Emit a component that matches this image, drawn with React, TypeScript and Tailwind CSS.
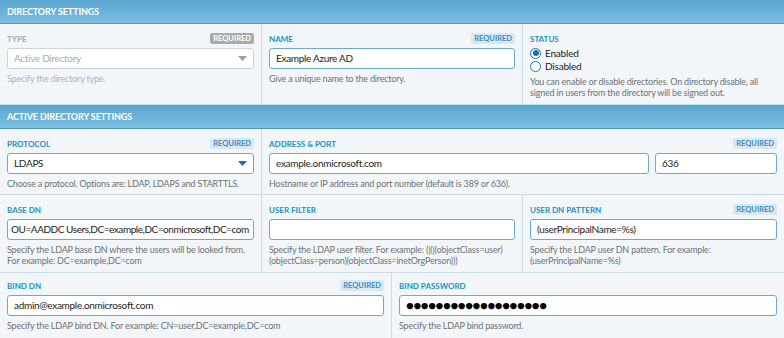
import type { ReactNode } from 'react';

const font = { fontFamily: 'Lato, "Open Sans", sans-serif' };

const Header = ({ title }: { title: string }) => (
  <div className="h-[24px] flex items-center px-[7px] bg-gradient-to-b from-[#58a6d1] to-[#7cbfe1] border-b border-[#4b97c4]">
    <span className="text-white text-[9px] font-bold tracking-[-0.1px] uppercase">{title}</span>
  </div>
);

const Badge = ({ disabled = false }: { disabled?: boolean }) => (
  <span
    className={`px-[3px] h-[11px] leading-[11px] rounded-[2px] text-[7.5px] font-bold ${
      disabled ? 'bg-[#ababab] text-white' : 'bg-[#d8e8f3] text-[#3b8ec4]'
    }`}
  >
    REQUIRED
  </span>
);

const Label = ({ text, required = false, disabled = false }: { text?: string; required?: boolean; disabled?: boolean }) => (
  <div className="h-[11px] flex items-center justify-between">
    <span className={`text-[8px] font-bold uppercase ${disabled ? 'text-[#a3a9ad]' : 'text-[#1c8fcf]'}`}>{text}</span>
    {required && <Badge disabled={disabled} />}
  </div>
);

type InputProps = {
  value?: string;
  disabled?: boolean;
  select?: boolean;
  dots?: boolean;
  tight?: boolean;
};

const Input = ({ value, disabled = false, select = false, dots = false, tight = false }: InputProps) => (
  <div
    className={`mt-[4px] h-[21px] flex items-center rounded-[3px] border bg-white ${
      tight ? 'px-[3px]' : 'px-[6px]'
    } ${disabled ? 'border-[#cfd3d6]' : 'border-[#68acd5]'}`}
  >
    {dots ? (
      <span className="text-[13px] leading-none tracking-[-0.4px] text-black">{'●'.repeat(19)}</span>
    ) : (
      <span
        className={`flex-1 text-[10px] whitespace-nowrap overflow-hidden ${
          tight ? 'tracking-[-0.45px]' : 'tracking-[-0.3px]'
        } ${disabled ? 'text-[#a7abae]' : 'text-[#1d1d1d]'}`}
      >
        {value}
      </span>
    )}
    {select && (
      <svg width="9" height="5" viewBox="0 0 9 5" className="ml-1">
        <path d="M0 0h9L4.5 5z" fill={disabled ? '#9a9ea1' : '#1b6fae'} />
      </svg>
    )}
  </div>
);

const Help = ({ children, disabled = false }: { children: ReactNode; disabled?: boolean }) => (
  <p className={`mt-[4px] text-[9px] leading-[11px] tracking-[-0.2px] ${disabled ? 'text-[#b0b4b7]' : 'text-[#6b7378]'}`}>
    {children}
  </p>
);

const Cell = ({ children, className = '' }: { children: ReactNode; className?: string }) => (
  <div className={`bg-[#f2f6f9] px-[7px] ${className}`}>{children}</div>
);

const Radio = ({ checked, label }: { checked: boolean; label: string }) => (
  <div className="flex items-center gap-[4px] h-[12px]">
    <span
      className={`w-[11px] h-[11px] rounded-full border flex items-center justify-center bg-white ${
        checked ? 'border-[#1b6fae]' : 'border-[#2a76b0]'
      }`}
    >
      {checked && <span className="w-[6px] h-[6px] rounded-full bg-[#1b6fae]" />}
    </span>
    <span className="text-[10px] tracking-[-0.2px] text-[#1d1d1d]">{label}</span>
  </div>
);

export default function App() {
  return (
    <div className="w-[784px] h-[338px] overflow-hidden bg-[#c9dce8]" style={font}>
      <Header title="Directory Settings" />
      <div className="grid grid-cols-[261px_260px_1fr] gap-px border-b border-[#c9dce8]">
        <Cell className="h-[80px] pt-[9px]">
          <Label text="Type" required disabled />
          <Input value="Active Directory" disabled select />
          <Help disabled>Specify the directory type.</Help>
        </Cell>
        <Cell className="h-[80px] pt-[9px]">
          <Label text="Name" required />
          <Input value="Example Azure AD" />
          <Help>Give a unique name to the directory.</Help>
        </Cell>
        <Cell className="h-[80px] pt-[9px]">
          <Label text="Status" />
          <div className="mt-[3px] flex flex-col gap-[1px]">
            <Radio checked label="Enabled" />
            <Radio checked={false} label="Disabled" />
          </div>
          <Help>
            You can enable or disable directories. On directory disable, all
            <br />
            signed in users from the directory will be signed out.
          </Help>
        </Cell>
      </div>
      <Header title="Active Directory Settings" />
      <div className="grid grid-cols-[261px_260px_1fr] gap-px">
        <Cell className="h-[65px] pt-[9px]">
          <Label text="Protocol" required />
          <Input value="LDAPS" select />
          <Help>Choose a protocol. Options are: LDAP, LDAPS and STARTTLS.</Help>
        </Cell>
        <Cell className="h-[65px] pt-[9px] col-span-2">
          <Label text="Address & Port" required />
          <div className="flex gap-[6px]">
            <div className="w-[380px]">
              <Input value="example.onmicrosoft.com" />
            </div>
            <div className="flex-1">
              <Input value="636" />
            </div>
          </div>
          <Help>Hostname or IP address and port number (default is 389 or 636).</Help>
        </Cell>
        <Cell className="h-[77px] pt-[9px]">
          <Label text="Base DN" />
          <Input value="OU=AADDC Users,DC=example,DC=onmicrosoft,DC=com" tight />
          <Help>
            Specify the LDAP base DN where the users will be looked from.
            <br />
            For example: DC=example,DC=com
          </Help>
        </Cell>
        <Cell className="h-[77px] pt-[9px]">
          <Label text="User Filter" />
          <Input value="" />
          <Help>
            Specify the LDAP user filter. For example: (|(|(objectClass=user)
            <br />
            (objectClass=person)(objectClass=inetOrgPerson)))
          </Help>
        </Cell>
        <Cell className="h-[77px] pt-[9px]">
          <Label text="User DN Pattern" required />
          <Input value="(userPrincipalName=%s)" />
          <Help>
            Specify the LDAP user DN pattern. For example:
            <br />
            (userPrincipalName=%s)
          </Help>
        </Cell>
      </div>
      <div className="grid grid-cols-[391px_1fr] gap-px mt-px">
        <Cell className="h-[70px] pt-[7px]">
          <Label text="Bind DN" required />
          <Input value="admin@example.onmicrosoft.com" />
          <Help>Specify the LDAP bind DN. For example: CN=user,DC=example,DC=com</Help>
        </Cell>
        <Cell className="h-[70px] pt-[7px]">
          <Label text="Bind Password" />
          <Input dots />
          <Help>Specify the LDAP bind password.</Help>
        </Cell>
      </div>
    </div>
  );
}
